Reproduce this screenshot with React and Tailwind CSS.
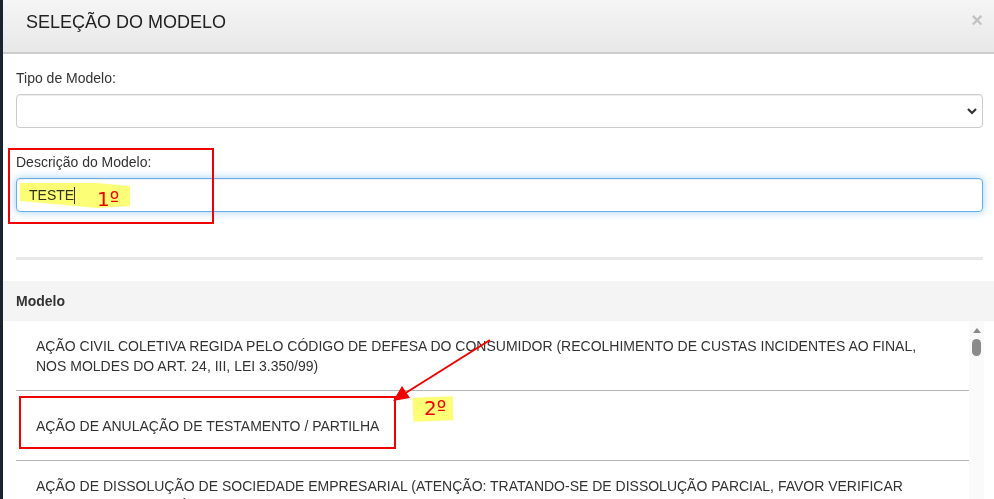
import React from "react";

const font = { fontFamily: '"Liberation Sans", Arial, sans-serif' };

function Row({ children }) {
  return (
    <div className="h-[70px] flex items-center border-b border-[#b5b5b5] pl-5 pr-5 text-[14px] leading-5 text-[#333]">
      <div>{children}</div>
    </div>
  );
}

export default function App() {
  return (
    <div className="relative w-[994px] h-[499px] overflow-hidden flex bg-white" style={font}>
      <div className="w-[3px] shrink-0 bg-[#1b2230]" />
      <div className="flex-1 flex flex-col">
        {/* header */}
        <div className="h-[54px] shrink-0 flex items-center justify-between border-b-2 border-[#cdcdcd] bg-gradient-to-b from-[#f5f5f5] to-[#e8e8e8] pl-[23px] pr-[11px]">
          <h1 className="text-[18px] text-[#222] -mt-[8px]">SELEÇÃO DO MODELO</h1>
          <span className="text-[#c2c2c2] text-[20px] font-bold -mt-[12px] leading-none">×</span>
        </div>
        {/* body */}
        <div className="pl-[13px] pr-[11px] pt-[14px] shrink-0">
          <label className="block text-[14px] leading-5 text-[#333] mb-[6px]">Tipo de Modelo:</label>
          <div className="h-[34px] rounded border border-[#cccccc] flex items-center justify-end pr-[4px] shadow-[inset_0_1px_1px_rgba(0,0,0,0.075)]">
            <svg width="12" height="8" viewBox="0 0 12 8">
              <path d="M2 2 L6 6 L10 2" fill="none" stroke="#333" strokeWidth="2.2" />
            </svg>
          </div>
          <label className="block text-[14px] leading-5 text-[#333] mt-[24px] mb-[6px]">Descrição do Modelo:</label>
          <div className="h-[34px] rounded border border-[#66afe9] flex items-center pl-[12px] text-[14px] text-[#333] shadow-[inset_0_1px_1px_rgba(0,0,0,0.075),0_0_8px_rgba(102,175,233,0.6)]">
            <span>TESTE</span>
            <span className="inline-block w-px h-[17px] bg-[#333]" />
          </div>
          <div className="h-[3px] bg-[#e9e9e9] mt-[45px]" />
        </div>
        <div className="h-[40px] mt-[21px] shrink-0 bg-[#f4f4f4] flex items-center pl-[13px] text-[14px] font-bold text-[#333]">
          Modelo
        </div>
        <div className="flex flex-1 pl-[13px] pr-[10px] min-h-0">
          <div className="flex-1">
            <Row>
              AÇÃO CIVIL COLETIVA REGIDA PELO CÓDIGO DE DEFESA DO CONSUMIDOR (RECOLHIMENTO DE CUSTAS INCIDENTES AO FINAL,
              <br />
              NOS MOLDES DO ART. 24, III, LEI 3.350/99)
            </Row>
            <Row>AÇÃO DE ANULAÇÃO DE TESTAMENTO / PARTILHA</Row>
            <Row>
              AÇÃO DE DISSOLUÇÃO DE SOCIEDADE EMPRESARIAL (ATENÇÃO: TRATANDO-SE DE DISSOLUÇÃO PARCIAL, FAVOR VERIFICAR
              <br />
              OS MODELOS ESPECÍFICOS)
            </Row>
          </div>
          <div className="w-[15px] bg-[#fafafa] flex flex-col items-center pt-[7px]">
            <div className="w-0 h-0 border-l-[4px] border-r-[4px] border-b-[5px] border-l-transparent border-r-transparent border-b-[#888]" />
            <div className="w-[9px] h-[17px] rounded-full bg-[#8a8a8a] mt-[6px]" />
          </div>
        </div>
      </div>

      {/* annotations */}
      <div className="absolute left-[8px] top-[148px] w-[206px] h-[76px] border-2 border-[#ee0000]" />
      <div
        className="absolute left-[20px] top-[183px] w-[110px] h-[25px] bg-[#fbff3c] opacity-70 mix-blend-multiply"
        style={{ clipPath: "polygon(0 0, 70% 0, 100% 12%, 100% 92%, 70% 100%, 0 72%)" }}
      />
      <span className="absolute left-[97px] top-[187px] text-[20px] leading-6 text-[#ee0000]" style={{ fontFamily: '"DejaVu Sans", sans-serif' }}>
        1º
      </span>
      <div className="absolute left-[19px] top-[396px] w-[377px] h-[53px] border-2 border-[#ee0000]" />
      <div className="absolute left-[413px] top-[397px] w-[40px] h-[24px] bg-[#fbff3c] opacity-70 mix-blend-multiply -rotate-2" />
      <span className="absolute left-[424px] top-[396px] text-[20px] leading-6 text-[#ee0000]" style={{ fontFamily: '"DejaVu Sans", sans-serif' }}>
        2º
      </span>
      <svg className="absolute left-0 top-0 pointer-events-none" width="994" height="499">
        <line x1="490" y1="340" x2="404" y2="394" stroke="#ee0000" strokeWidth="2" />
        <polygon points="393,401 402,386 410,398" fill="#ee0000" />
      </svg>
    </div>
  );
}
